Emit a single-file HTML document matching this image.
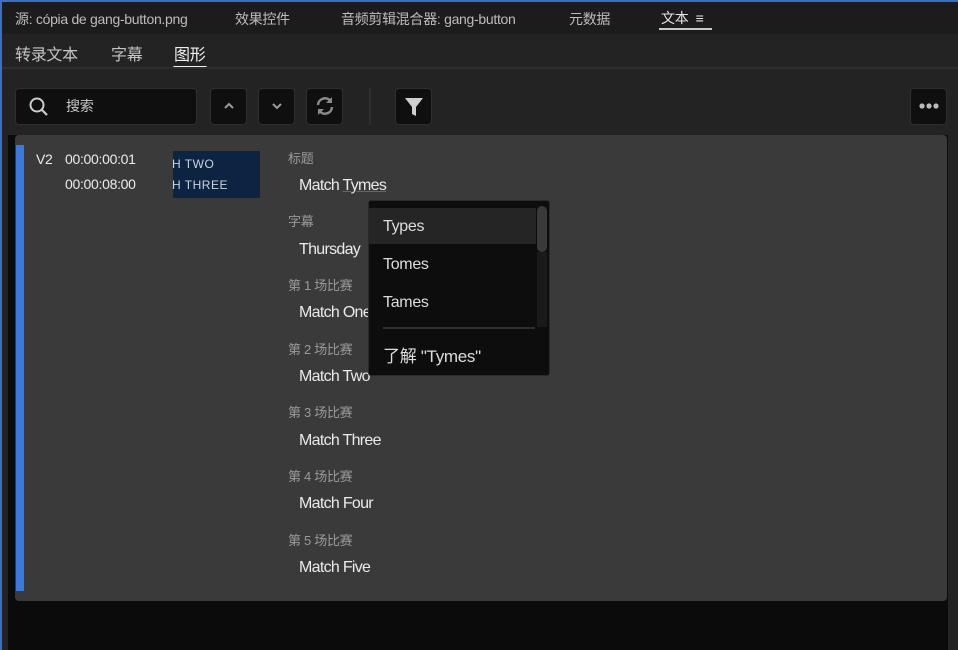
<!DOCTYPE html>
<html><head><meta charset="utf-8"><style>
*{margin:0;padding:0;box-sizing:border-box}
body{width:958px;height:650px;background:#232323;font-family:"Liberation Sans","Noto Sans CJK SC",sans-serif;position:relative;overflow:hidden;color:#ddd}
.abs{position:absolute}
.top{left:0;top:0;width:958px;height:34px;background:#1c1c1c;border-top:2px solid #3a6fc4;border-left:2px solid #3a6fc4}
.t{position:absolute;font-size:14px;color:#bdbdbd;white-space:nowrap;letter-spacing:-0.3px}
.btn{position:absolute;background:#0f0f0f;border:1px solid #2e2e2e;border-radius:4px}
.lbl{position:absolute;left:288px;font-size:13px;color:#9a9a9a;letter-spacing:-0.3px}
.val{position:absolute;left:299px;font-size:16px;color:#eaeaea;letter-spacing:-0.7px}
</style></head><body>
<div class="abs" style="left:0;top:0;width:2px;height:650px;background:#3a6fc4"></div>
<div class="abs top"></div>
<div class="t" style="left:15px;top:9px">源: cópia de gang-button.png</div>
<div class="t" style="left:235px;top:9px">效果控件</div>
<div class="t" style="left:341px;top:9px">音频剪辑混合器: gang-button</div>
<div class="t" style="left:569px;top:9px">元数据</div>
<div class="t" style="left:661px;top:8px;color:#e6e6e6">文本 &nbsp;≡</div>
<div class="abs" style="left:659px;top:28px;width:53px;height:2px;background:#c8c8c8"></div>

<div class="t" style="left:15px;top:41px;font-size:16px;color:#c4c4c4">转录文本</div>
<div class="t" style="left:111px;top:41px;font-size:16px;color:#c4c4c4">字幕</div>
<div class="t" style="left:174px;top:41px;font-size:16px;color:#f0f0f0">图形</div>
<div class="abs" style="left:173px;top:66px;width:34px;height:3px;background:#f0f0f0;border-radius:2px"></div>
<div class="abs" style="left:2px;top:67px;width:956px;height:2px;background:#2e2e2e"></div>

<div class="btn" style="left:15px;top:88px;width:182px;height:37px"></div>
<svg class="abs" style="left:28px;top:96px" width="22" height="22"><circle cx="9" cy="9" r="6.5" fill="none" stroke="#ccc" stroke-width="2"/><path d="M14 14l5 5" stroke="#ccc" stroke-width="2.2"/></svg>
<div class="t" style="left:66px;top:96px;font-size:14px;color:#c8c8c8">搜索</div>
<div class="btn" style="left:210px;top:88px;width:37px;height:37px"></div>
<svg class="abs" style="left:222px;top:100px" width="14" height="12"><path d="M3 8l4-4 4 4" fill="none" stroke="#9a9a9a" stroke-width="2"/></svg>
<div class="btn" style="left:258px;top:88px;width:37px;height:37px"></div>
<svg class="abs" style="left:270px;top:100px" width="14" height="12"><path d="M3 4l4 4 4-4" fill="none" stroke="#9a9a9a" stroke-width="2"/></svg>
<div class="btn" style="left:306px;top:88px;width:37px;height:37px"></div>
<svg class="abs" style="left:314px;top:95px" width="22" height="22"><path d="M4 10a7 7 0 0 1 12.5-4" fill="none" stroke="#8a8a8a" stroke-width="2.5"/><path d="M18 2v6h-6z" fill="#8a8a8a"/><path d="M18 12a7 7 0 0 1-12.5 4" fill="none" stroke="#8a8a8a" stroke-width="2.5"/><path d="M4 20v-6h6z" fill="#8a8a8a"/></svg>
<div class="abs" style="left:369px;top:88px;width:2px;height:37px;background:#2e2e2e"></div>
<div class="btn" style="left:395px;top:88px;width:37px;height:37px"></div>
<svg class="abs" style="left:404px;top:96px" width="20" height="22"><path d="M1 2h18l-7 9v9l-4-2v-7z" fill="#cfcfcf"/></svg>
<div class="btn" style="left:910px;top:88px;width:37px;height:37px"></div>
<svg class="abs" style="left:918px;top:101px" width="22" height="10"><circle cx="4" cy="5" r="2.6" fill="#bbb"/><circle cx="11" cy="5" r="2.6" fill="#bbb"/><circle cx="18" cy="5" r="2.6" fill="#bbb"/></svg>

<div class="abs" style="left:8px;top:135px;width:940px;height:515px;background:#0b0b0b"></div>
<div class="abs" style="left:15px;top:135px;width:932px;height:466px;background:#3a3a3a;border-radius:4px"></div>
<div class="abs" style="left:16px;top:145px;width:8px;height:446px;background:#3a79e0"></div>
<div class="t" style="left:36px;top:151px;color:#ececec;font-size:14px">V2</div>
<div class="t" style="left:65px;top:151px;color:#ececec;font-size:14px">00:00:00:01</div>
<div class="t" style="left:65px;top:176px;color:#ececec;font-size:14px">00:00:08:00</div>
<div class="abs" style="left:173px;top:151px;width:87px;height:47px;background:#0c2442"></div>
<div class="t" style="left:172px;top:157px;font-size:12px;color:#c8d3e0;letter-spacing:0.5px">H TWO</div>
<div class="t" style="left:172px;top:178px;font-size:12px;color:#c8d3e0;letter-spacing:0.5px">H THREE</div>

<div class="lbl" style="top:148px">标题</div>
<div class="val" style="top:177px">Match <span style="text-decoration:underline;text-decoration-color:#d33">Tymes</span></div>
<div class="lbl" style="top:211px">字幕</div>
<div class="val" style="top:241px">Thursday</div>
<div class="lbl" style="top:275px">第 1 场比赛</div>
<div class="val" style="top:304px">Match One</div>
<div class="lbl" style="top:339px">第 2 场比赛</div>
<div class="val" style="top:368px">Match Two</div>
<div class="lbl" style="top:402px">第 3 场比赛</div>
<div class="val" style="top:432px">Match Three</div>
<div class="lbl" style="top:466px">第 4 场比赛</div>
<div class="val" style="top:495px">Match Four</div>
<div class="lbl" style="top:530px">第 5 场比赛</div>
<div class="val" style="top:559px">Match Five</div>

<div class="abs" style="left:368px;top:200px;width:182px;height:176px;background:#0d0d0d;border:1px solid #2a2a2a;border-radius:3px"></div>
<div class="abs" style="left:369px;top:208px;width:167px;height:36px;background:#252525"></div>
<div class="abs" style="left:537px;top:206px;width:10px;height:46px;background:#3a3a3a;border-radius:5px"></div>
<div class="abs" style="left:537px;top:252px;width:10px;height:75px;background:#1a1a1a"></div>
<div class="t" style="left:383px;top:218px;font-size:16px;color:#ddd">Types</div>
<div class="t" style="left:383px;top:256px;font-size:16px;color:#ddd">Tomes</div>
<div class="t" style="left:383px;top:294px;font-size:16px;color:#ddd">Tames</div>
<div class="abs" style="left:383px;top:327px;width:152px;height:2px;background:#2e2e2e"></div>
<div class="t" style="left:383px;top:342px;font-size:17px;color:#ddd">了解 "Tymes"</div>
</body></html>
